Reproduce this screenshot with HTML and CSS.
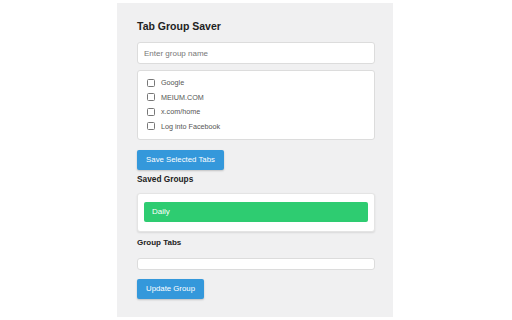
FILE: index.html
```html
<!DOCTYPE html>
<html>
<head>
<meta charset="utf-8">
<link rel="stylesheet" href="styles.css">
</head>
<body>
<div class="panel">
  <h1 class="title">Tab Group Saver</h1>
  <input class="name-input" type="text" placeholder="Enter group name">
  <div class="tab-list">
    <label class="tab-row"><input type="checkbox" class="check"><span>Google</span></label>
    <label class="tab-row"><input type="checkbox" class="check"><span>MEIUM.COM</span></label>
    <label class="tab-row"><input type="checkbox" class="check"><span>x.com/home</span></label>
    <label class="tab-row"><input type="checkbox" class="check"><span>Log into Facebook</span></label>
  </div>
  <button class="btn btn-save">Save Selected Tabs</button>
  <h2 class="section saved-title">Saved Groups</h2>
  <div class="groups">
    <div class="group-item">Daily</div>
  </div>
  <h2 class="section tabs-title">Group Tabs</h2>
  <div class="group-tabs"></div>
  <button class="btn btn-update">Update Group</button>
</div>
</body>
</html>
```
FILE: styles.css
```css
html, body {
  margin: 0;
  padding: 0;
  background: #ffffff;
}
body {
  font-family: "Liberation Sans", Arial, sans-serif;
  color: #222;
}
.panel {
  box-sizing: border-box;
  width: 276px;
  height: 314px;
  margin: 3px 0 0 117px;
  padding: 17px 18px 0 20px;
  background: #f0f0f1;
  display: flex;
  flex-direction: column;
  align-items: flex-start;
}
.title {
  margin: 0;
  font-size: 10.5px;
  line-height: 12px;
  font-weight: bold;
  color: #222;
}
.name-input {
  box-sizing: border-box;
  margin: 10px 0 0;
  width: 238px;
  height: 22px;
  border: 1px solid #dcdcdc;
  border-radius: 3px;
  padding: 0 6px;
  font-family: "Liberation Sans", Arial, sans-serif;
  font-size: 8px;
  background: #fff;
  outline: none;
}
.name-input::placeholder {
  color: #777;
}
.tab-list {
  box-sizing: border-box;
  margin-top: 6px;
  width: 238px;
  height: 70px;
  border: 1px solid #dcdcdc;
  border-radius: 3px;
  background: #fff;
  padding: 4.5px 8px 0 8px;
  display: flex;
  flex-direction: column;
}
.tab-row {
  display: flex;
  align-items: center;
  height: 14.5px;
  font-size: 7.2px;
  color: #555;
}
.check {
  appearance: none;
  -webkit-appearance: none;
  box-sizing: border-box;
  width: 8px;
  height: 8px;
  margin: 0 6px 0 1px;
  border: 1px solid #777;
  border-radius: 1.5px;
  background: #fff;
}
.btn {
  box-sizing: border-box;
  height: 20px;
  border: none;
  border-radius: 2px;
  background: #3498db;
  color: #fff;
  font-family: "Liberation Sans", Arial, sans-serif;
  font-size: 7.8px;
  line-height: 20px;
  padding: 0 9.5px;
  box-shadow: 0 1px 2px rgba(0, 0, 0, 0.2);
}
.btn-save {
  margin-top: 10px;
  width: 87px;
  padding: 0;
}
.section {
  margin: 0;
  font-weight: bold;
  line-height: 10px;
  color: #222;
}
.saved-title {
  margin-top: 4px;
  font-size: 8.3px;
}
.groups {
  box-sizing: border-box;
  margin-top: 9px;
  width: 238px;
  height: 39px;
  background: #fff;
  border: 1px solid #e4e4e4;
  border-radius: 3px;
  box-shadow: 0 1px 2px rgba(0, 0, 0, 0.1);
  padding: 8px 6px 0 6px;
}
.group-item {
  box-sizing: border-box;
  height: 20px;
  background: #2ecc71;
  border-radius: 2px;
  color: #fff;
  font-size: 8px;
  line-height: 20px;
  padding-left: 8px;
}
.tabs-title {
  margin-top: 6px;
  font-size: 8px;
}
.group-tabs {
  box-sizing: border-box;
  margin-top: 10px;
  width: 238px;
  height: 12px;
  background: #fff;
  border: 1px solid #dcdcdc;
  border-radius: 3px;
}
.btn-update {
  margin-top: 9px;
  width: 67px;
  padding: 0;
}
```
